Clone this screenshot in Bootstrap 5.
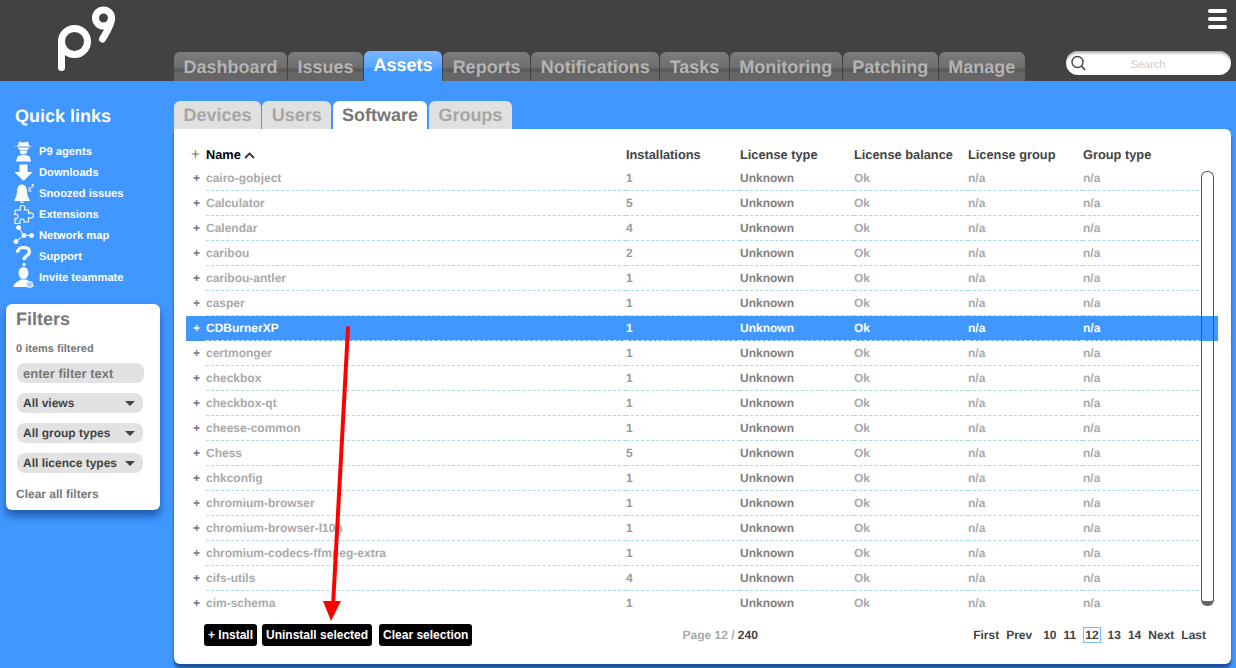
<!DOCTYPE html>
<html lang="en">
<head>
    <title>Assets - Software</title>
    <meta name="viewport" content="width=device-width, initial-scale=1.0">
    <link href="https://cdn.jsdelivr.net/npm/bootstrap@5.3.0/dist/css/bootstrap.min.css" rel="stylesheet">
    <style>
        html, body {
            height: 668px;
            overflow: hidden;
        }

        body {
            background-color: #3f97ff;
            font-family: "Liberation Sans", Arial, sans-serif;
            font-size: 12px;
            position: relative;
            text-rendering: geometricPrecision;
        }

        .top-bar {
            height: 81px;
            background-color: #424242;
        }

        .logo-box {
            width: 174px;
            flex: none;
            padding: 6px 0 0 56px;
        }

        .main-tabs {
            gap: 1px;
            margin-top: 52px;
        }

        .main-tab {
            height: 29px;
            padding: 5px 9.5px 0;
            font-size: 18px;
            line-height: 21px;
            font-weight: 700;
            color: #b4b4b4;
            text-decoration: none;
            border-radius: 6px 6px 0 0;
            background: linear-gradient(#7c7c7c 0, #6e6e6e 52%, #555 62%, #666 72%, #666 100%);
        }

        .main-tab.on {
            color: #fff;
            height: 30px;
            margin-top: -1px;
            padding-top: 4px;
            background: linear-gradient(#78b7ff 0, #5aa6ff 52%, #3f97ff 60%, #3f97ff 100%);
        }

        .search-box {
            width: 165px;
            height: 24px;
            flex: none;
            margin: 51px 0 0 auto;
            border-radius: 12px;
            background: #fff;
            box-shadow: inset 0 3px 3px -1px #aaa;
            color: #ccc;
            font-size: 11px;
            line-height: 28px;
            text-align: center;
            padding: 0 21px 0 2px;
        }

        .search-box svg {
            margin-left: 2px;
            flex: none;
        }

        .burger {
            width: 19px;
            flex: none;
            margin: 9px 9px 0 -23px;
            height: 20px;
        }

        .burger span {
            display: block;
            height: 4px;
            border-radius: 2px;
            background: #fff;
            margin-bottom: 4px;
        }

        .side-col {
            width: 174px;
            flex: none;
        }

        .quick-title {
            font-size: 18px;
            line-height: 22px;
            font-weight: 700;
            color: #fff;
            padding: 24px 0 0 15px;
            margin-bottom: 14px;
        }

        .quick-link {
            height: 21px;
            color: #fff;
            font-size: 11.2px;
            line-height: 15px;
            font-weight: 700;
            text-decoration: none;
            padding-left: 13px;
        }

        .quick-link span {
            padding-top: 2px;
        }

        .quick-link svg {
            width: 21px;
            height: 21px;
            flex: none;
            margin-right: 5px;
        }

        .filter-panel {
            width: 154px;
            height: 206px;
            margin: 16px 0 0 6px;
            padding: 4px 16px 0 10px;
            background: #fff;
            border-radius: 6px;
            box-shadow: 0 6px 8px rgba(10, 50, 110, 0.6);
            color: #777;
            font-weight: 700;
        }

        .filter-title {
            font-size: 18px;
            line-height: 22px;
        }

        .filter-count {
            font-size: 11px;
            line-height: 13px;
            margin: 13px 0 7px;
        }

        .filter-pill {
            width: 126px;
            height: 20px;
            margin: 0 0 10px 1px;
            padding: 0 6px;
            background: #e2e2e2;
            border-radius: 8px;
            line-height: 20px;
            color: #444;
            white-space: nowrap;
        }

        .filter-pill.txt {
            width: 127px;
            color: #777;
            font-size: 13px;
            line-height: 21px;
        }

        .filter-pill i {
            width: 0;
            height: 0;
            border-left: 5px solid transparent;
            border-right: 5px solid transparent;
            border-top: 5px solid #444;
            margin-right: 2px;
        }

        .filter-clear {
            margin-top: 14px;
            line-height: 14px;
        }

        .sub-tabs {
            gap: 1.5px;
            height: 28px;
            margin-top: 20px;
        }

        .sub-tab {
            height: 28px;
            padding: 3px 9.4px 0;
            font-size: 18px;
            line-height: 23px;
            font-weight: 700;
            color: #a6a6a6;
            background: #e0e0e0;
            border-radius: 6px 6px 0 0;
            text-decoration: none;
        }

        .sub-tab.on {
            background: #fff;
            color: #777;
        }

        .main-panel {
            width: 1057px;
            height: 535px;
            background: #fff;
            border-radius: 0 6px 6px 6px;
            box-shadow: 0 4px 3px rgba(10, 50, 110, 0.7);
            padding-left: 12px;
            padding-top: 14px;
            position: relative;
        }

        .sw-head, .sw-row {
            display: grid;
            grid-template-columns: 20px 420px 114px 114px 114px 115px 116px 19px;
            width: 1032px;
        }

        .sw-head {
            height: 23px;
            line-height: 24px;
            font-size: 12.8px;
            font-weight: 700;
            color: #444;
            white-space: nowrap;
        }

        .sw-head .nm {
            color: #000;
        }

        .sw-head .pl {
            font-size: 15px;
            color: #777;
            font-weight: 400;
            padding-left: 5px;
        }

        .sw-row {
            height: 25px;
            font-weight: 700;
            color: #a9a9a9;
            line-height: 24px;
        }

        .sw-row > div {
            border-bottom: 1px dashed #a8dbe8;
            white-space: nowrap;
        }

        .sw-row > div:first-child, .sw-row > div:last-child, .sw-row:last-child > div {
            border-bottom-color: transparent;
        }

        .sw-row .pl {
            padding-left: 7px;
            color: #777;
        }

        .sw-row .ty {
            color: #808080;
        }

        .sw-row .ins {
            color: #999;
        }

        .sw-row.sel {
            background: #3f97ff;
        }

        .sw-row.sel > div {
            color: #fff;
            border-bottom-color: #d8ecff;
        }

        .sw-row.sel > div:first-child, .sw-row.sel > div:last-child {
            border-bottom-color: transparent;
        }

        .fake-scroll {
            position: absolute;
            left: 1027px;
            top: 42px;
            width: 13px;
            height: 435px;
            border: 1px solid #555;
            border-bottom: 5px solid #666;
            border-radius: 6px;
        }

        .foot-bar {
            margin-top: 8px;
            padding-left: 18px;
            height: 22px;
            width: 1020px;
        }

        .foot-btn {
            background: #000;
            color: #fff;
            font-size: 12px;
            font-weight: 700;
            border: 0;
            border-radius: 3px;
            height: 22px;
            padding: 0 4px;
            margin-right: 5px;
            line-height: 22px;
            flex: none;
            white-space: nowrap;
        }

        .foot-btn.last {
            margin-left: 2px;
        }

        .page-info {
            flex: none;
            margin-left: 205px;
            color: #a9a9a9;
            font-weight: 700;
        }

        .page-info b {
            color: #444;
        }

        .pager {
            margin-left: auto;
            color: #444;
            font-weight: 700;
            gap: 7px;
        }

        .pager .cur {
            border: 1px solid #7ab8ff;
            padding: 0 1px;
            line-height: 14px;
        }

        .red-arrow {
            position: absolute;
            left: 320px;
            top: 320px;
            pointer-events: none;
        }
    </style>
</head>
<body>
    <div class="top-bar d-flex">
        <div class="logo-box">
            <svg width="62" height="68" viewBox="0 0 62 68">
                <g fill="none" stroke="#fff" stroke-width="7" stroke-linecap="round">
                    <circle cx="18.500" cy="35.500" r="13"/>
                    <path d="M5.500 36V61.500"/>
                    <circle cx="47.500" cy="12" r="8"/>
                    <path d="M55.500 13C55 20 50 27 46.500 33"/>
                </g>
            </svg>
        </div>
        <div class="main-tabs d-flex">
            <a class="main-tab" href="#">Dashboard</a>
            <a class="main-tab" href="#">Issues</a>
            <a class="main-tab on" href="#">Assets</a>
            <a class="main-tab" href="#">Reports</a>
            <a class="main-tab" href="#">Notifications</a>
            <a class="main-tab" href="#">Tasks</a>
            <a class="main-tab" href="#">Monitoring</a>
            <a class="main-tab" href="#">Patching</a>
            <a class="main-tab" href="#">Manage</a>
        </div>
        <div class="search-box d-flex">
            <svg width="16" height="24" viewBox="0 0 16 24">
                <circle cx="7.500" cy="11" r="5.500" fill="none" stroke="#444" stroke-width="1.400"/>
                <path d="M11.500 15L15 19" stroke="#444" stroke-width="1.600"/>
            </svg>
            <span class="flex-grow-1">Search</span>
        </div>
        <div class="burger"><span></span><span></span><span></span></div>
    </div>

    <div class="d-flex">
        <div class="side-col">
            <div class="quick-title">Quick links</div>
            <a class="quick-link d-flex align-items-center" href="#">
                <svg viewBox="0 0 21 21" fill="#fff"><path d="M6 .5L9 1.500L12 1.200L15 .5L16 4.500L20.500 5.500H.5L5 4.500Z"/><path d="M5 6.500H16V7.500L13.500 9.500H7.500L5 7.500Z"/><path d="M6.500 10H14.500C14 12.500 12.500 13.500 10.500 13.500S7 12.500 6.500 10Z"/><path d="M3 20.500L4.500 15.500L8 14H13L16.500 15.500L18 20.500Z"/></svg>
                <span>P9 agents</span>
            </a>
            <a class="quick-link d-flex align-items-center" href="#">
                <svg viewBox="0 0 21 21" fill="#fff"><path d="M6.500 2.500H14.500V10H19.500L10.500 19L1.500 10H6.500Z"/></svg>
                <span>Downloads</span>
            </a>
            <a class="quick-link d-flex align-items-center" href="#">
                <svg viewBox="0 0 21 21" fill="#fff"><path d="M9 1.500C12.500 1.500 14 5 14 9C14 13 16 15 17 18H1C2 15 4 13 4 9C4 5 5.500 1.500 9 1.500Z"/><path d="M7 18.500H11C11 20.500 7 20.500 7 18.500Z"/><path d="M15 5H18L15.500 8H18.500M18.500 1.500H20.800L18.500 3.800H20.800" fill="none" stroke="#fff" stroke-width=".9"/></svg>
                <span>Snoozed issues</span>
            </a>
            <a class="quick-link d-flex align-items-center" href="#">
                <svg viewBox="0 0 21 21" fill="none" stroke="#fff" stroke-width="1.100"><path d="M2.500 6H7.500C6.500 4 7 1.500 9.500 1.500S12.500 4 11.500 6H15.500V9.500C17 8.500 20.500 8.500 20.500 11.500S17 14.500 15.500 13.500V18H11C11.500 16.500 11 15 9 15S6.500 16.500 7 19.500H2V14.500C3.500 15 5 14.500 5 12.500S3.500 10 1.500 10.500Z"/></svg>
                <span>Extensions</span>
            </a>
            <a class="quick-link d-flex align-items-center" href="#">
                <svg viewBox="0 0 21 21" fill="#fff" stroke="#fff" stroke-width="1"><path d="M6 2.500L10.500 10.500H19M10.500 10.500L3 16.500" fill="none"/><circle cx="5.500" cy="2.500" r="2"/><circle cx="11" cy="10.500" r="2"/><circle cx="18.500" cy="10.500" r="2"/><circle cx="3" cy="16.500" r="2"/></svg>
                <span>Network map</span>
            </a>
            <a class="quick-link d-flex align-items-center" href="#">
                <svg viewBox="0 0 21 21" fill="none" stroke="#fff" stroke-width="3.200"><path d="M4.500 6.500C4.500 3 7.500 1.500 10.500 1.500C14.500 1.500 16.500 3.500 16.500 6C16.500 9.500 11 9.500 11 14"/><circle cx="11" cy="18.500" r="1.300" fill="#fff" stroke-width="1"/></svg>
                <span>Support</span>
            </a>
            <a class="quick-link d-flex align-items-center" href="#">
                <svg viewBox="0 0 21 21"><ellipse cx="10.500" cy="6" rx="5" ry="6" fill="#fff"/><path d="M.5 20C.5 16 5 14.500 7.500 12.500H13.500C16 14.500 20.500 16 20.500 20Z" fill="#fff"/><circle cx="16.500" cy="17.500" r="3.200" fill="#a9cfff" stroke="#fff" stroke-width=".8"/></svg>
                <span>Invite teammate</span>
            </a>

            <div class="filter-panel">
                <div class="filter-title">Filters</div>
                <div class="filter-count">0 items filtered</div>
                <div class="filter-pill txt">enter filter text</div>
                <div class="filter-pill d-flex justify-content-between align-items-center">All views<i></i></div>
                <div class="filter-pill d-flex justify-content-between align-items-center">All group types<i></i></div>
                <div class="filter-pill d-flex justify-content-between align-items-center">All licence types<i></i></div>
                <div class="filter-clear">Clear all filters</div>
            </div>
        </div>

        <div>
            <div class="sub-tabs d-flex">
                <a class="sub-tab" href="#">Devices</a>
                <a class="sub-tab" href="#">Users</a>
                <a class="sub-tab on" href="#">Software</a>
                <a class="sub-tab" href="#">Groups</a>
            </div>
            <div class="main-panel">
                <div class="sw-head">
                    <div class="pl">+</div>
                    <div class="nm">Name
                        <svg width="11" height="7" viewBox="0 0 11 7"><path d="M1 6L5.500 1.500L10 6" fill="none" stroke="#333" stroke-width="1.800"/></svg>
                    </div>
                    <div>Installations</div>
                    <div>License type</div>
                    <div>License balance</div>
                    <div>License group</div>
                    <div>Group type</div>
                </div>
                <div id="rows"></div>
                <div class="fake-scroll"></div>
                <div class="foot-bar d-flex align-items-center">
                    <button class="foot-btn">+ Install</button>
                    <button class="foot-btn">Uninstall selected</button>
                    <button class="foot-btn last">Clear selection</button>
                    <div class="page-info">Page 12 / <b>240</b></div>
                    <div class="pager d-flex align-items-center">
                        <span>First</span><span class="me-1">Prev</span><span>10</span><span>11</span><span class="cur">12</span><span>13</span><span>14</span><span>Next</span><span>Last</span>
                    </div>
                </div>
            </div>
        </div>
    </div>

    <svg class="red-arrow" width="40" height="304" viewBox="320 320 40 304">
        <path d="M348 328L333 606" stroke="#f00" stroke-width="4" stroke-linecap="round"/>
        <path d="M323 601H341L331 621Z" fill="#f00"/>
    </svg>

    <script src="https://cdn.jsdelivr.net/npm/bootstrap@5.3.0/dist/js/bootstrap.bundle.min.js"></script>
    <script>
        const software = [
            ['cairo-gobject', 1], ['Calculator', 5], ['Calendar', 4], ['caribou', 2], ['caribou-antler', 1],
            ['casper', 1], ['CDBurnerXP', 1], ['certmonger', 1], ['checkbox', 1], ['checkbox-qt', 1],
            ['cheese-common', 1], ['Chess', 5], ['chkconfig', 1], ['chromium-browser', 1], ['chromium-browser-l10n', 1],
            ['chromium-codecs-ffmpeg-extra', 1], ['cifs-utils', 4], ['cim-schema', 1]
        ];

        document.getElementById('rows').innerHTML = software.map(function (s) {
            return `<div class="sw-row${s[0] === 'CDBurnerXP' ? ' sel' : ''}">
                <div class="pl">+</div><div>${s[0]}</div><div class="ins">${s[1]}</div>
                <div class="ty">Unknown</div><div>Ok</div><div>n/a</div><div>n/a</div><div></div>
            </div>`;
        }).join('');
    </script>
</body>
</html>
